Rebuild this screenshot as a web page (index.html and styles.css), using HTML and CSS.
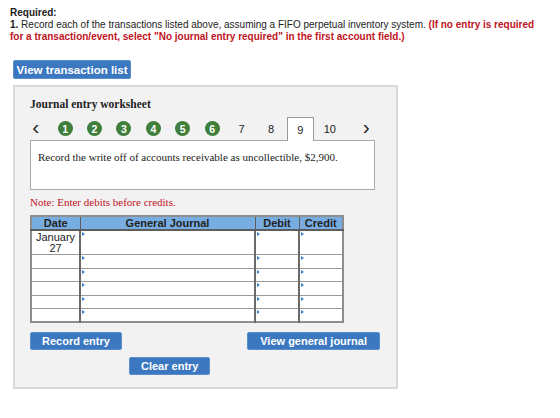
FILE: index.html
```html
<!DOCTYPE html>
<html lang="en">
<head>
  <meta charset="UTF-8" />
  <meta name="viewport" content="width=device-width, initial-scale=1" />
  <title>Journal Entry Worksheet</title>
  <link rel="stylesheet" href="styles.css">
</head>
<body>
  <div class="required">
    <div class="req-title">Required:</div>
    <p><b>1.</b> Record each of the transactions listed above, assuming a FIFO perpetual inventory system. <span class="red">(If no entry is required for a transaction/event, select "No journal entry required" in the first account field.)</span></p>
  </div>

  <button class="btn btn-list">View transaction list</button>

  <div class="worksheet">
    <h3 class="ws-title">Journal entry worksheet</h3>

    <div class="steps">
      <span class="step arrow">&lsaquo;</span>
      <span class="step"><i class="done">1</i></span>
      <span class="step"><i class="done">2</i></span>
      <span class="step"><i class="done">3</i></span>
      <span class="step"><i class="done">4</i></span>
      <span class="step"><i class="done">5</i></span>
      <span class="step"><i class="done">6</i></span>
      <span class="step">7</span>
      <span class="step">8</span>
      <span class="step current">9</span>
      <span class="step">10</span>
      <span class="step arrow next">&rsaquo;</span>
    </div>

    <div class="prompt">Record the write off of accounts receivable as uncollectible, $2,900.</div>

    <div class="note">Note: Enter debits before credits.</div>

    <table class="journal">
      <thead>
        <tr>
          <th class="c-date">Date</th>
          <th class="c-acct">General Journal</th>
          <th class="c-num">Debit</th>
          <th class="c-num">Credit</th>
        </tr>
      </thead>
      <tbody>
        <tr class="first">
          <td class="c-date">January<br>27</td>
          <td class="mark"></td><td class="mark"></td><td class="mark"></td>
        </tr>
        <tr><td></td><td class="mark"></td><td class="mark"></td><td class="mark"></td></tr>
        <tr><td></td><td class="mark"></td><td class="mark"></td><td class="mark"></td></tr>
        <tr><td></td><td class="mark"></td><td class="mark"></td><td class="mark"></td></tr>
        <tr><td></td><td class="mark"></td><td class="mark"></td><td class="mark"></td></tr>
        <tr><td></td><td class="mark"></td><td class="mark"></td><td class="mark"></td></tr>
      </tbody>
    </table>

    <div class="actions">
      <button class="btn">Record entry</button>
      <button class="btn wide">View general journal</button>
    </div>
    <div class="actions center">
      <button class="btn">Clear entry</button>
    </div>
  </div>
</body>
</html>
```

FILE: styles.css
```css
* {
  box-sizing: border-box;
}
body {
  margin: 0;
  padding: 7px 0 0 10px;
  background: #fff;
  font-family: 'Liberation Sans', Arial, sans-serif;
  color: #222;
}
.required {
  font-size: 10px;
  line-height: 12px;
  width: 528px;
}
.req-title {
  font-weight: bold;
}
.required p {
  margin: 0;
}
.red {
  color: #c0141e;
  font-weight: bold;
}

/* Blue action buttons */
.btn {
  font-family: 'Liberation Sans', Arial, sans-serif;
  font-size: 11px;
  font-weight: bold;
  color: #fff;
  background: #3b78bf;
  border: 1px solid #5a8fcc;
  border-radius: 2px;
  height: 19px;
  padding: 0 11px;
  cursor: pointer;
}
.btn-list {
  margin: 17px 0 0 3px;
  width: 118px;
  padding: 0;
  font-size: 11.5px;
}

.worksheet {
  margin: 6px 0 0 3px;
  width: 385px;
  height: 304px;
  background: #f2f2f2;
  border: 2px solid #d8d8d8;
  padding: 10px 15px 0;
}
.ws-title {
  margin: 0;
  font-family: 'Liberation Serif', 'Times New Roman', serif;
  font-size: 11.5px;
  line-height: 14px;
}

/* Step navigation */
.steps {
  display: flex;
  align-items: flex-end;
  margin: 6px 0 0 -9px;
  height: 23px;
  font-size: 11px;
}
.step {
  width: 30px;
  height: 23px;
  display: flex;
  align-items: center;
  justify-content: center;
  color: #222;
}
.step.arrow {
  font-size: 21px;
  padding-bottom: 3px;
}
.step.next {
  margin-left: 7px;
}
.done {
  font-style: normal;
  font-weight: bold;
  color: #fff;
  background: #3f7f3b;
  width: 15px;
  height: 15px;
  border-radius: 50%;
  display: flex;
  align-items: center;
  justify-content: center;
  font-size: 10.5px;
}
.step.current {
  width: 28px;
  margin-left: 1px;
  margin-right: 1px;
  background: #fff;
  border: 1px solid #9a9a9a;
  border-bottom: none;
  position: relative;
  z-index: 1;
  margin-bottom: -1px;
  height: 24px;
}

.prompt {
  height: 50px;
  width: 345px;
  background: #fff;
  border: 1px solid #a9a9a9;
  padding: 10px 7px;
  font-family: 'Liberation Serif', 'Times New Roman', serif;
  font-size: 11px;
}
.note {
  margin-top: 6px;
  color: #c0141e;
  font-family: 'Liberation Serif', 'Times New Roman', serif;
  font-size: 11px;
  line-height: 13px;
}

/* Journal table */
.journal {
  margin-top: 6px;
  width: 312px;
  border-collapse: collapse;
  border: 2px solid #8e8e8e;
  table-layout: fixed;
  font-size: 11px;
}
.journal th {
  background: #78ade2;
  height: 14px;
  padding: 0;
  font-weight: bold;
  color: #222;
  border: 1px solid #5d5d5d;
  border-bottom: 2px solid #5d5d5d;
  line-height: 12px;
}
.journal .c-date { width: 49px; }
.journal .c-acct { width: 175px; }
.journal .c-num { width: 44px; }
.journal td {
  background: #fff;
  height: 13.5px;
  padding: 0;
  border: 1px solid #9a9a9a;
  border-left: 2px solid #6a6a6a;
  position: relative;
}
.journal td:first-child {
  border-left: none;
}
.journal tr.first td {
  height: 24px;
  vertical-align: top;
}
.journal td.c-date {
  text-align: center;
  line-height: 11px;
  padding-top: 1px;
}
.journal td.mark::before {
  content: "";
  position: absolute;
  top: 1px;
  left: 1px;
  border-left: 3px solid #3a7fd0;
  border-top: 2px solid transparent;
  border-bottom: 2px solid transparent;
}

.actions {
  display: flex;
  justify-content: space-between;
  margin-top: 9px;
  width: 350px;
}
.actions .btn {
  height: 18px;
  padding: 0 11px;
}
.actions .btn.wide {
  padding: 0 12px;
}
.actions.center {
  justify-content: flex-start;
  margin-top: 7px;
  padding-left: 99px;
}
```
